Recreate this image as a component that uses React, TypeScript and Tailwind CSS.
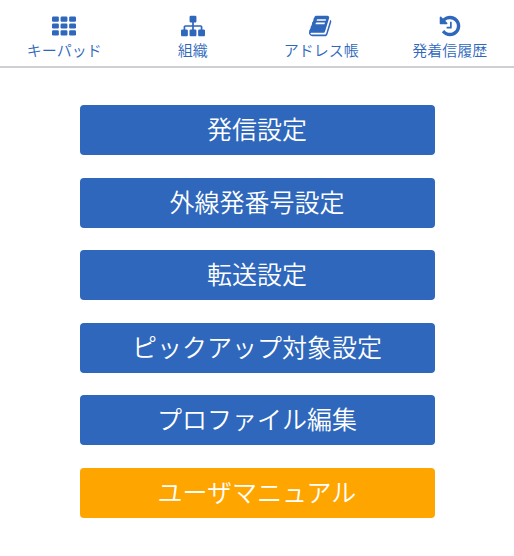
const tabs = [
  {
    label: 'キーパッド',
    icon: (
      <g>
        {[192, 704, 1216].map(y =>
          [0, 640, 1280].map(x => <rect key={`${x}-${y}`} x={x} y={y} width="512" height="384" rx="90" />),
        )}
      </g>
    ),
  },
  {
    label: '組織',
    icon: (
      <path d="M1792 1248v320q0 40-28 68t-68 28h-320q-40 0-68-28t-28-68v-320q0-40 28-68t68-28h96v-192h-512v192h96q40 0 68 28t28 68v320q0 40-28 68t-68 28h-320q-40 0-68-28t-28-68v-320q0-40 28-68t68-28h96v-192h-512v192h96q40 0 68 28t28 68v320q0 40-28 68t-68 28h-320q-40 0-68-28t-28-68v-320q0-40 28-68t68-28h96v-192q0-52 38-90t90-38h512v-192h-96q-40 0-68-28t-28-68v-320q0-40 28-68t68-28h320q40 0 68 28t28 68v320q0 40-28 68t-68 28h-96v192h512q52 0 90 38t38 90v192h96q40 0 68 28t28 68z" />
    ),
  },
  {
    label: 'アドレス帳',
    icon: (
      <path d="M1639 478q40 57 18 129l-275 906q-19 64-76.5 107.5t-122.5 43.5h-923q-77 0-148.5-53.5t-99.5-131.5q-24-67-2-127 0-4 3-27t4-37q1-8-3-21.5t-3-19.5q2-11 8-21t16.5-23.5 16.5-23.5q23-38 45-91.5t30-91.5q3-10 .5-30t-.5-28q3-11 17-28t17-23q21-36 42-92t25-90q1-9-2.5-32t.5-28q4-13 22-30.5t22-22.5q19-26 42.5-84.5t27.5-96.5q1-8-3-25.5t-2-26.5q2-8 9-18t18-23 17-21q8-12 16.5-30.5t15-35 16-36 19.5-32 26.5-23.5 36-11.5 47.5 5.5l-1 3q38-9 51-9h761q74 0 114 56t18 130l-274 906q-36 119-71.5 153.5t-128.5 34.5h-869q-27 0-38 15-11 16-1 43 24 70 144 70h923q29 0 56-15.5t35-41.5l300-987q7-22 5-57 38 15 59 43zm-1064 2q-4 13 2 22.5t20 9.5h608q13 0 25.5-9.5t16.5-22.5l21-64q4-13-2-22.5t-20-9.5h-608q-13 0-25.5 9.5t-16.5 22.5zm-83 256q-4 13 2 22.5t20 9.5h608q13 0 25.5-9.5t16.5-22.5l21-64q4-13-2-22.5t-20-9.5h-608q-13 0-25.5 9.5t-16.5 22.5z" />
    ),
  },
  {
    label: '発着信履歴',
    icon: (
      <path d="M1664 896q0 156-61 298t-164 245-245 164-298 61q-172 0-327-72.5t-264-204.5q-7-10-6.5-22.5t8.5-20.5l137-138q10-9 25-9 16 2 23 12 73 95 179 147t225 52q104 0 198.5-40.5t163.5-109.5 109.5-163.5 40.5-198.5-40.5-198.5-109.5-163.5-163.5-109.5-198.5-40.5q-98 0-188 35.5t-160 101.5l137 138q31 30 14 69-17 40-59 40h-448q-26 0-45-19t-19-45v-448q0-42 40-59 39-17 69 14l130 129q107-101 244.5-156.5t284.5-55.5q156 0 298 61t245 164 164 245 61 298zm-640-288v448q0 14-9 23t-23 9h-320q-14 0-23-9t-9-23v-64q0-14 9-23t23-9h224v-352q0-14 9-23t23-9h64q14 0 23 9t9 23z" />
    ),
  },
]

const menu = ['発信設定', '外線発番号設定', '転送設定', 'ピックアップ対象設定', 'プロファイル編集']

export default function App() {
  return (
    <div className="min-h-[556px] bg-white font-['Roboto','Noto_Sans_CJK_JP',sans-serif] font-[350]">
      <div className="flex h-[68px] border-b-2 border-[#d0d0d4]">
        {tabs.map(({ label, icon }) => (
          <div key={label} className="flex w-1/4 flex-col items-center pt-[13.5px] text-[#2e67bc]">
            <svg viewBox="0 0 1792 1792" fill="currentColor" className="h-6 w-6">
              {icon}
            </svg>
            <span className="mt-[3px] text-[15px] leading-5">{label}</span>
          </div>
        ))}
      </div>

      <div className="flex flex-col items-center gap-[22.5px] pt-[37px]">
        {menu.map(label => (
          <button key={label} className="h-[50px] w-[355px] rounded-[4px] bg-[#2e67bc] pt-[2px] text-[25px] text-white">
            {label}
          </button>
        ))}
        <button className="h-[50px] w-[355px] rounded-[4px] bg-[#ffa500] pt-[2px] text-[25px] text-white">
          ユーザマニュアル
        </button>
      </div>
    </div>
  )
}
